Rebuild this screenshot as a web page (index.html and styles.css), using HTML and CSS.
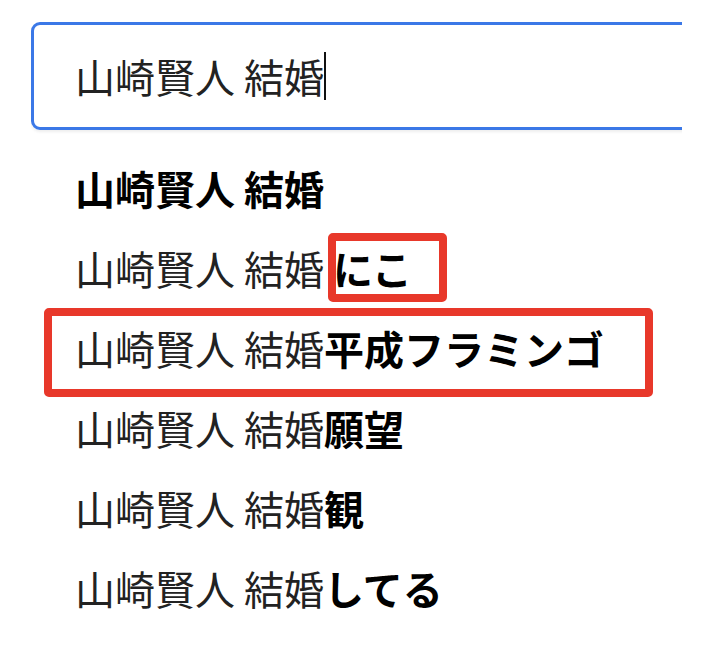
FILE: index.html
```html
<!DOCTYPE html>
<html lang="ja">
<head>
  <meta charset="UTF-8">
  <meta name="viewport" content="width=device-width, initial-scale=1.0">
  <title>山崎賢人 結婚 - 検索候補</title>
  <link rel="stylesheet" href="styles.css">
</head>
<body>
  <!-- Search box (cut off at the right edge of the capture) -->
  <div class="search-clip">
    <div class="search-box">
      <span class="search-text">山崎賢人 結婚</span><span class="caret"></span>
    </div>
  </div>

  <!-- Autocomplete suggestions -->
  <ul class="suggestions">
    <li class="suggestion"><b>山崎賢人 結婚</b></li>
    <li class="suggestion">
      山崎賢人 結婚 <b>にこ</b>
      <span class="mark mark-nico" aria-hidden="true"></span>
    </li>
    <li class="suggestion">
      山崎賢人 結婚<b>平成フラミンゴ</b>
      <span class="mark mark-flamingo" aria-hidden="true"></span>
    </li>
    <li class="suggestion">山崎賢人 結婚<b>願望</b></li>
    <li class="suggestion">山崎賢人 結婚<b>観</b></li>
    <li class="suggestion">山崎賢人 結婚<b>してる</b></li>
  </ul>
</body>
</html>
```

FILE: styles.css
```css
body {
  margin: 0;
  padding: 22px 0 0 31px;
  font-family: "Noto Sans CJK JP", "Noto Sans", sans-serif;
  color: #222;
  background-color: #fff;
}

/* Search box */
.search-clip {
  width: 651px;
  overflow: hidden;
  padding-bottom: 6px;
}

.search-box {
  display: flex;
  align-items: center;
  box-sizing: border-box;
  width: 800px;
  height: 108px;
  padding-left: 41px;
  border: 3px solid #3b78e7;
  border-radius: 9px;
  box-shadow: 0 2px 3px rgba(0,0,0,0.07);
  font-size: 40px;
}

.search-text {
  color: #222;
  line-height: 1;
}

.caret {
  display: inline-block;
  width: 2px;
  height: 48px;
  background-color: #111;
}

/* Suggestions */
.suggestions {
  list-style: none;
  margin: 12px 0 0 0;
  padding: 0 0 0 44px;
}

.suggestion {
  position: relative;
  height: 80px;
  line-height: 80px;
  font-size: 40px;
  white-space: nowrap;
  color: #222;
}

.suggestion b {
  font-weight: 700;
  color: #000;
}

/* Red annotation frames */
.mark {
  position: absolute;
  box-sizing: border-box;
  border: 8px solid #e8382a;
  border-radius: 5px;
}

.mark-nico {
  top: 5px;
  left: 253px;
  width: 119px;
  height: 69px;
}

.mark-flamingo {
  top: 0;
  left: -31px;
  width: 609px;
  height: 89px;
}
```
